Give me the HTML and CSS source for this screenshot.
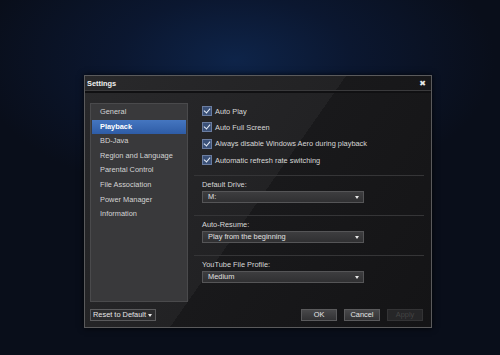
FILE: index.html
```html
<!DOCTYPE html>
<html lang="en">
<head>
<meta charset="UTF-8">
<title>Settings</title>
<link rel="stylesheet" href="styles.css">
</head>
<body>

<div class="dialog">
  <div class="titlebar">
    <span class="title">Settings</span>
    <span class="close">&#x2716;</span>
  </div>

  <div class="content">
    <ul class="nav">
      <li>General</li>
      <li class="active">Playback</li>
      <li>BD-Java</li>
      <li>Region and Language</li>
      <li>Parental Control</li>
      <li>File Association</li>
      <li>Power Manager</li>
      <li>Information</li>
    </ul>

    <div class="panel">
      <div class="checks">
        <label class="check"><span class="box"></span>Auto Play</label>
        <label class="check"><span class="box"></span>Auto Full Screen</label>
        <label class="check"><span class="box"></span>Always disable Windows Aero during playback</label>
        <label class="check"><span class="box"></span>Automatic refresh rate switching</label>
      </div>

      <div class="section">
        <div class="label">Default Drive:</div>
        <div class="select">M:<span class="arrow"></span></div>
      </div>
      <div class="section">
        <div class="label">Auto-Resume:</div>
        <div class="select">Play from the beginning<span class="arrow"></span></div>
      </div>
      <div class="section">
        <div class="label">YouTube File Profile:</div>
        <div class="select">Medium<span class="arrow"></span></div>
      </div>
    </div>
  </div>

  <div class="footer">
    <div class="button reset">Reset to Default<span class="arrow"></span></div>
    <div class="actions">
      <div class="button">OK</div>
      <div class="button">Cancel</div>
      <div class="button disabled">Apply</div>
    </div>
  </div>
</div>

</body>
</html>
```

FILE: styles.css
```css
html, body {
  margin: 0;
  height: 100%;
}
body {
  font-family: Tahoma, "Liberation Sans", sans-serif;
  font-size: 7.4px;
  color: #d8d8d8;
  background: radial-gradient(ellipse 260px 140px at 235px 60px, #0e2449 0%, #0b1730 45%, #090e1a 100%);
  overflow: hidden;
}
.dialog {
  box-sizing: border-box;
  margin: 75px 0 0 84px;
  width: 348px;
  height: 253px;
  border: 1px solid #5a5a5c;
  background: linear-gradient(125deg, #29292b 0%, #222224 50%, #19191b 50%, #141416 100%);
  box-shadow: 0 0 6px rgba(0,0,0,0.8);
  display: flex;
  flex-direction: column;
}
.titlebar {
  height: 14px;
  padding: 0 5px 0 2px;
  display: flex;
  align-items: center;
  justify-content: space-between;
  border-bottom: 1px solid #3a3a3c;
  box-shadow: 0 2px 0 #101012;
}
.title {
  font-weight: bold;
  color: #f0f0f0;
}
.close {
  color: #e8e8e8;
  font-size: 8px;
  font-family: "DejaVu Sans", sans-serif;
}
.content {
  display: flex;
  padding: 12px 7px 0 5px;
  gap: 6px;
}
.nav {
  list-style: none;
  margin: 0;
  padding: 1px 1px 0;
  width: 94px;
  height: 196px;
  background: #39393b;
  border: 1px solid #4a4a4c;
  flex-shrink: 0;
}
.nav li {
  height: 14.6px;
  line-height: 14.6px;
  padding-left: 8px;
  color: #d4d4d4;
}
.nav li.active {
  background: linear-gradient(#4576c0, #2e5ca6);
  color: #fff;
  font-weight: bold;
}
.panel {
  flex: 1;
}
.checks {
  padding: 0 0 7px 8px;
}
.check {
  display: flex;
  align-items: center;
  height: 16.3px;
  gap: 3px;
}
.box {
  width: 8px;
  height: 8px;
  border: 1px solid #6b7da0;
  background: #3b5178;
  position: relative;
}
.box::after {
  content: "";
  position: absolute;
  left: 2px;
  top: 0;
  width: 3px;
  height: 5px;
  border: solid #e8eef8;
  border-width: 0 1.5px 1.5px 0;
  transform: rotate(40deg);
}
.section {
  border-top: 1px solid #353537;
  padding: 4px 0 12px 8px;
}
.label {
  height: 10px;
  line-height: 10px;
  margin-bottom: 1px;
}
.select {
  box-sizing: border-box;
  width: 162px;
  height: 12px;
  line-height: 10px;
  padding-left: 5px;
  border: 1px solid #555557;
  background: linear-gradient(#3d3d3f, #303032);
  color: #e0e0e0;
  position: relative;
}
.arrow {
  position: absolute;
  right: 4px;
  top: 4px;
  border-left: 2.5px solid transparent;
  border-right: 2.5px solid transparent;
  border-top: 3px solid #e8e8e8;
}
.footer {
  margin-top: auto;
  display: flex;
  justify-content: space-between;
  align-items: center;
  padding: 0 8px 6px 5px;
}
.actions {
  display: flex;
  gap: 7px;
}
.button {
  box-sizing: border-box;
  width: 36px;
  height: 12px;
  line-height: 10px;
  text-align: center;
  border: 1px solid #5a5a5c;
  background: linear-gradient(#48484a, #323234);
  color: #e6e6e6;
}
.button.disabled {
  color: #444;
  background: #262628;
  border-color: #333335;
}
.button.reset {
  width: 66px;
  text-align: left;
  padding-left: 2px;
  position: relative;
  background: #2c2c2e;
  white-space: nowrap;
}
.button.reset .arrow {
  right: 3px;
}
```
